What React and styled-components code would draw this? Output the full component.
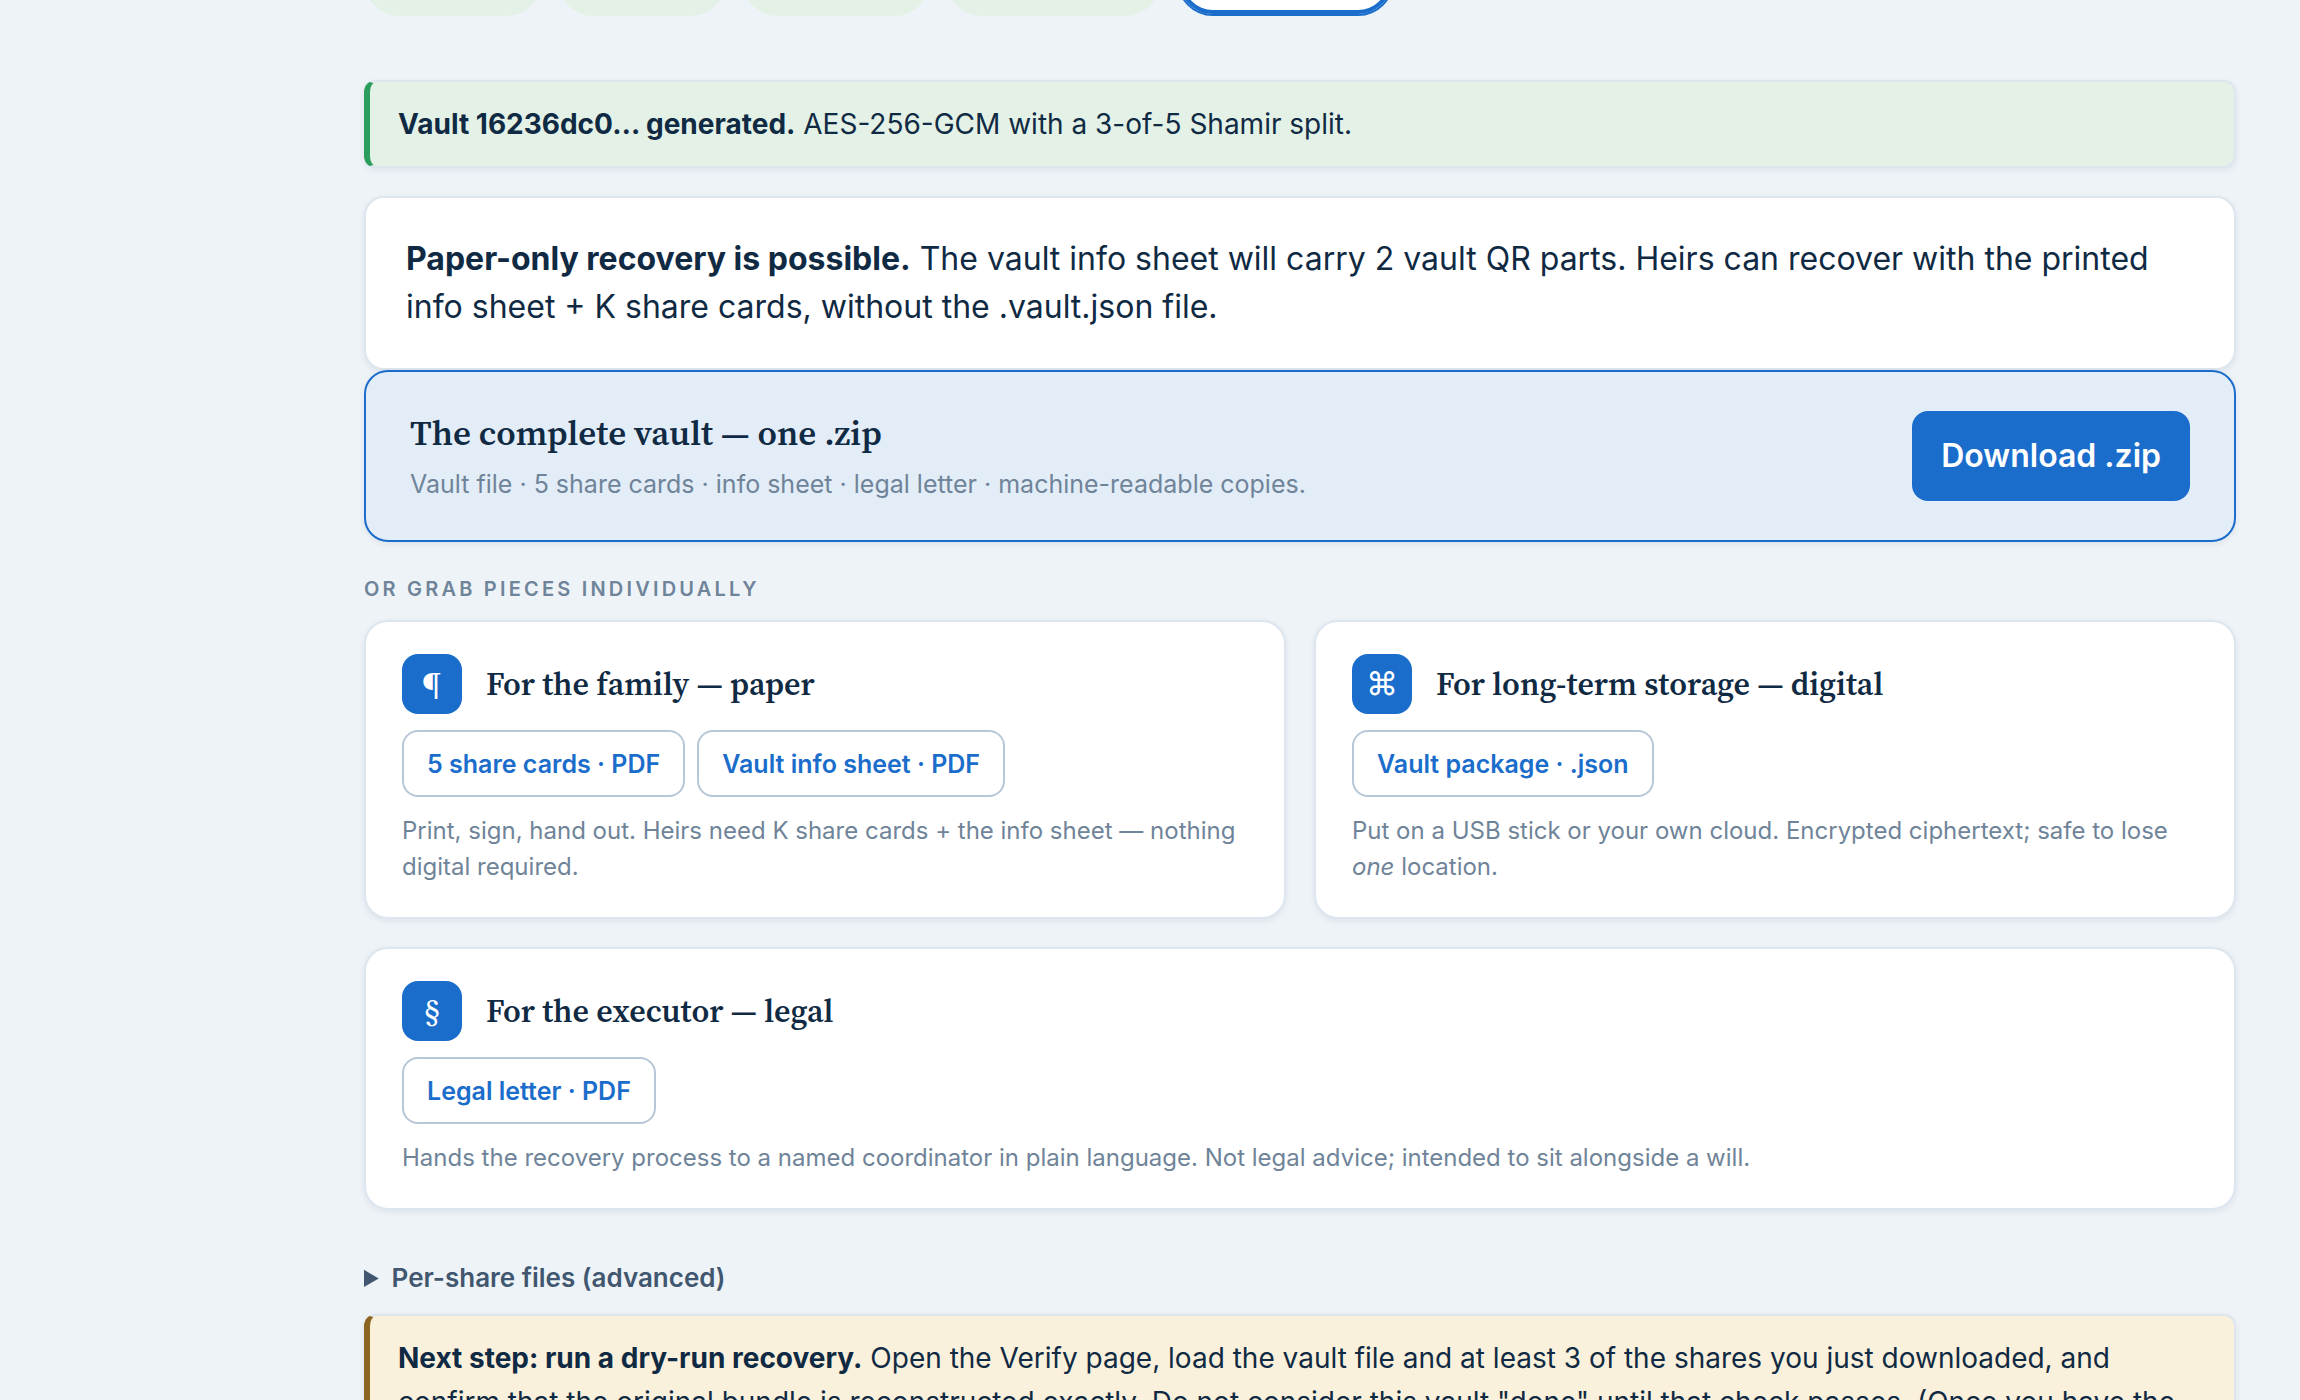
import React from "react";
import styled, { createGlobalStyle } from "styled-components";

const c = {
  page: "#eef3f8",
  ink: "#102a43",
  slate: "#40576f",
  muted: "#6f8499",
  line: "#dde6ef",
  blue: "#1b6dcb",
  sky: "#e3edf8",
  green: "#e3f1e7",
  sand: "#faf1dc",
};

const sans = `Inter, "Liberation Sans", sans-serif`;
const serif = `"Source Serif 4", "Source Serif Pro", "Noto Serif CJK SC", "Noto Serif", "Liberation Serif", serif`;

const GlobalStyle = createGlobalStyle`
  *, *::before, *::after { box-sizing: border-box; }
  body {
    margin: 0;
    background: ${c.page};
    color: ${c.ink};
    font-family: ${sans};
  }
`;

const Page = styled.div`
  height: 100vh;
  overflow: hidden;
  padding: 0 64px 0 364px;
`;

const Steps = styled.nav`
  display: flex;
  align-items: flex-end;
  gap: 16px;
  height: 16px;
  margin-bottom: 64px;
  overflow: hidden;
`;

const Step = styled.button`
  flex: none;
  width: ${(p) => p.$width}px;
  height: 72px;
  padding: 0;
  border: 2px solid ${(p) => (p.$active ? c.blue : c.green)};
  border-radius: 36px;
  background: ${(p) => (p.$active ? "#fff" : c.green)};
  box-shadow: ${(p) => (p.$active ? `inset 0 0 0 4px ${c.blue}` : "none")};
`;

const surface = `
  border: 2px solid ${c.line};
  box-shadow: 0 2px 6px rgba(16, 42, 67, 0.08);
`;

const Notice = styled.p`
  ${surface}
  margin: 0 0 28px;
  padding: 20px 28px;
  border-left: 6px solid ${(p) => p.$accent};
  border-radius: 12px;
  background: ${(p) => p.$fill};
  font-size: 28px;
  line-height: 44px;
`;

const Statement = styled.p`
  ${surface}
  margin: 0;
  padding: 37px 40px;
  border-radius: 20px;
  background: #fff;
  font-size: 32px;
  line-height: 48px;
`;

const Bundle = styled.section`
  ${surface}
  display: flex;
  align-items: center;
  justify-content: space-between;
  gap: 32px;
  padding: 38px 44px;
  border-color: ${c.blue};
  border-radius: 24px;
  background: ${c.sky};
`;

const BundleTitle = styled.h2`
  margin: 0 0 10px;
  font: 600 35px/46px ${serif};
`;

const Note = styled.p`
  margin: 0;
  color: ${c.muted};
  font-size: ${(p) => (p.$large ? 25 : 24)}px;
  line-height: 36px;
`;

const Primary = styled.button`
  flex: none;
  height: 90px;
  padding: 0 29px;
  border: 0;
  border-radius: 16px;
  background: ${c.blue};
  color: #fff;
  font: 600 32px/48px ${sans};
`;

const Eyebrow = styled.h3`
  margin: 32px 0 16px;
  color: ${c.muted};
  font-size: 20px;
  font-weight: 600;
  line-height: 30px;
  letter-spacing: 0.16em;
  text-transform: uppercase;
`;

const Cards = styled.div`
  display: grid;
  grid-template-columns: repeat(2, minmax(0, 1fr));
  gap: 28px;
`;

const Card = styled.article`
  ${surface}
  grid-column: ${(p) => (p.$wide ? "1 / -1" : "auto")};
  padding: 32px 36px;
  border-radius: 24px;
  background: #fff;
`;

const CardHead = styled.header`
  display: flex;
  align-items: center;
  gap: 24px;
`;

const Glyph = styled.span`
  display: grid;
  place-items: center;
  width: 60px;
  height: 60px;
  border-radius: 16px;
  background: ${c.blue};
  color: #fff;
  font: 400 32px/44px "Source Serif 4", "Source Serif Pro", ${sans};
`;

const CardTitle = styled.h4`
  margin: 0;
  font: 600 32px/44px ${serif};
`;

const Chips = styled.div`
  display: flex;
  flex-wrap: wrap;
  gap: 12px;
  margin: 16px 0;
`;

const Chip = styled.button`
  height: 67px;
  padding: 0 23px;
  border: 2px solid #b8c7d8;
  border-radius: 16px;
  background: #fff;
  color: ${c.blue};
  font: 600 25px/36px ${sans};
`;

const Advanced = styled.details`
  margin: 48px 0 16px;
`;

const Summary = styled.summary`
  color: ${c.slate};
  font-size: 26px;
  font-weight: 600;
  line-height: 40px;
`;

const steps = [178, 168, 188, 215, 217];

const groups = [
  {
    glyph: "¶",
    title: "For the family — paper",
    files: ["5 share cards · PDF", "Vault info sheet · PDF"],
    note: "Print, sign, hand out. Heirs need K share cards + the info sheet — nothing digital required.",
  },
  {
    glyph: "⌘",
    title: "For long-term storage — digital",
    files: ["Vault package · .json"],
    note: (
      <>
        Put on a USB stick or your own cloud. Encrypted ciphertext; safe to lose <em>one</em> location.
      </>
    ),
  },
  {
    glyph: "§",
    title: "For the executor — legal",
    files: ["Legal letter · PDF"],
    note: "Hands the recovery process to a named coordinator in plain language. Not legal advice; intended to sit alongside a will.",
    wide: true,
  },
];

export default function App() {
  return (
    <>
      <GlobalStyle />
      <Page>
        <Steps aria-label="Steps">
          {steps.map((width, i) => (
            <Step
              key={i}
              type="button"
              aria-label={`Step ${i + 1}`}
              $width={width}
              $active={i === steps.length - 1}
            />
          ))}
        </Steps>
        <main>
          <Notice $accent="#2b9d5c" $fill={c.green}>
            <strong>Vault 16236dc0… generated.</strong> AES-256-GCM with a 3-of-5 Shamir split.
          </Notice>
          <Statement>
            <strong>Paper-only recovery is possible.</strong> The vault info sheet will carry 2 vault QR parts.
            Heirs can recover with the printed info sheet + K share cards, without the .vault.json file.
          </Statement>
          <Bundle>
            <div>
              <BundleTitle>The complete vault — one .zip</BundleTitle>
              <Note $large>Vault file · 5 share cards · info sheet · legal letter · machine-readable copies.</Note>
            </div>
            <Primary type="button">Download .zip</Primary>
          </Bundle>
          <Eyebrow>Or grab pieces individually</Eyebrow>
          <Cards>
            {groups.map((g) => (
              <Card key={g.title} $wide={g.wide}>
                <CardHead>
                  <Glyph aria-hidden="true">{g.glyph}</Glyph>
                  <CardTitle>{g.title}</CardTitle>
                </CardHead>
                <Chips>
                  {g.files.map((f) => (
                    <Chip key={f} type="button">
                      {f}
                    </Chip>
                  ))}
                </Chips>
                <Note>{g.note}</Note>
              </Card>
            ))}
          </Cards>
          <Advanced>
            <Summary>Per-share files (advanced)</Summary>
          </Advanced>
          <Notice $accent="#8a6420" $fill={c.sand}>
            <strong>Next step: run a dry-run recovery.</strong> Open the Verify page, load the vault file and at
            least 3 of the shares you just downloaded, and confirm that the original bundle is reconstructed
            exactly. Do not consider this vault "done" until that check passes. (Once you have the
          </Notice>
        </main>
      </Page>
    </>
  );
}
